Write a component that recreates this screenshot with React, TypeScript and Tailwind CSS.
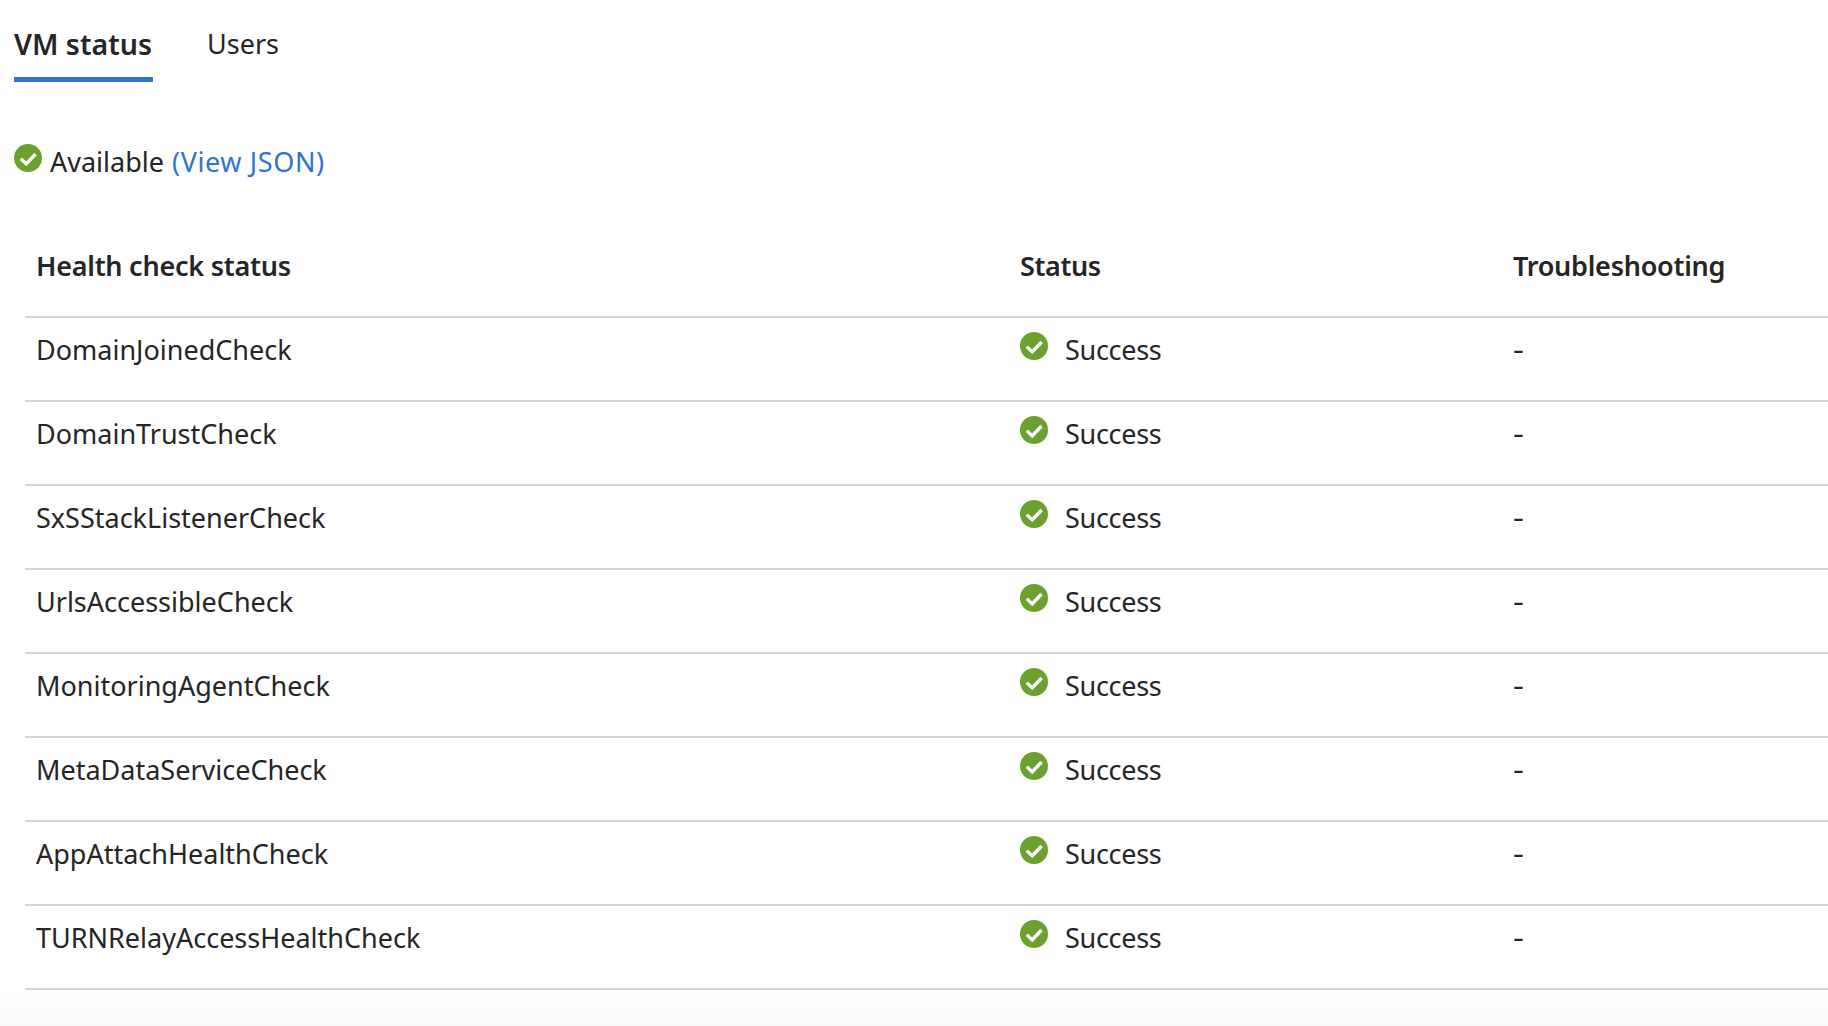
const rows = ["DomainJoinedCheck","DomainTrustCheck","SxSStackListenerCheck","UrlsAccessibleCheck","MonitoringAgentCheck","MetaDataServiceCheck","AppAttachHealthCheck","TURNRelayAccessHealthCheck"];

function Check({ className }: { className: string }) {
  return (
    <svg viewBox="0 0 28 27.6" className={className} aria-hidden="true">
      <circle cx="14" cy="14" r="14" fill="#6ba22f" />
      <path d="M6.8 14.6 12.2 19.9 21.6 10" fill="none" stroke="#fff" strokeWidth="3.4" />
    </svg>
  );
}

export default function App() {
  return (
    <div className="h-[1026px] w-[1828px] overflow-hidden bg-white font-['Noto_Sans',sans-serif] text-[27px] text-[#252525]">
      <div className="flex h-[82px] gap-[54px] pl-[14px]">
        <div className="h-[82px] w-[139px] whitespace-nowrap border-b-[5px] border-[#2f74d0] pt-[22px] text-[28.5px] font-semibold leading-[44px]">VM status</div>
        <div className="whitespace-nowrap pt-[22px] leading-[44px]">Users</div>
      </div>
      <div className="mt-[58px] flex h-[45px] items-start pl-[14px]">
        <Check className="mt-[4px] h-[27.6px] w-[28px]" />
        <span className="ml-[8px] whitespace-nowrap leading-[44px]">Available <a className="ml-[1px] tracking-[0.6px] text-[#2f74d0]">(View JSON)</a></span>
      </div>
      <div className="ml-[25px] mt-[22px]">
        <div className="grid h-[111px] grid-cols-[984px_493px_1fr] items-center border-b-2 border-[#d6d6d6] pl-[11px] pt-[9px] font-semibold tracking-[-0.25px]">
          <div>Health check status</div>
          <div className="tracking-[-0.4px]">Status</div>
          <div>Troubleshooting</div>
        </div>
        {rows.map((r) => (
          <div key={r} className="grid h-[84px] grid-cols-[984px_493px_1fr] items-center border-b-2 border-[#d6d6d6] pb-[18px] pl-[11px]">
            <div>{r}</div>
            <div className="flex items-center gap-[17px]">
              <Check className="relative top-[-4px] h-[27.6px] w-[28px]" />
              <span className="tracking-[-0.3px]">Success</span>
            </div>
            <div className="relative -top-px inline-block origin-left scale-x-125">-</div>
          </div>
        ))}
      </div>
      <div className="h-[36px] bg-gradient-to-b from-white to-[#fafafa]" />
    </div>
  );
}
